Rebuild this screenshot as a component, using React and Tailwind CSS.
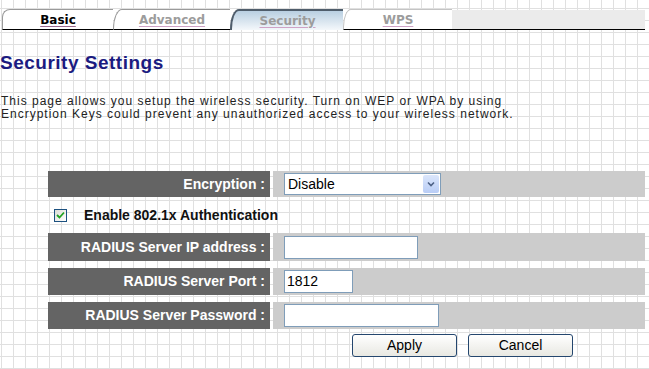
import React from "react";

const Tab = ({ children, className, textClass }) => (
  <div className={`flex items-center justify-center ${className}`}>
    <span className={`text-[12px] font-bold underline underline-offset-[2px] ${textClass}`} style={{ fontFamily: '"DejaVu Sans", Verdana, sans-serif' }}>
      {children}
    </span>
  </div>
);

const Label = ({ children }) => (
  <div className="w-[222px] shrink-0 bg-[#646464] flex items-center justify-end pr-[5px] text-white text-[14px] font-bold">
    {children}
  </div>
);

const TextInput = ({ w, value = "" }) => (
  <div className={`${w} h-[23px] bg-white border border-[#7f9db9] flex items-center px-[2px] text-[14px] text-black`}>
    {value}
  </div>
);

export default function App() {
  return (
    <div
      className="w-[649px] h-[369px] overflow-hidden bg-white bg-[linear-gradient(to_right,#e0e0e0_1px,transparent_1px),linear-gradient(to_bottom,#e0e0e0_1px,transparent_1px)] bg-[size:12px_12px] bg-[position:1px_8px] flex flex-col"
      style={{ fontFamily: '"Liberation Sans", Arial, sans-serif' }}
    >
      {/* Tabs */}
      <div className="flex ml-[2px] mt-[9px] h-[21px] w-[643px]">
        <Tab className="w-[111px] bg-white border-l border-t border-[#9a9a9a] border-b border-b-black rounded-tl-[8px]" textClass="text-black decoration-[#9a6a8e]">
          Basic
        </Tab>
        <Tab className="w-[117px] bg-white border-l border-t border-[#9a9a9a] border-b border-b-black rounded-tl-[9px_20px]" textClass="text-[#9c9c9c] decoration-[#cfa3c6]">
          Advanced
        </Tab>
        <Tab className="w-[113px] bg-gradient-to-b from-[#b9cfe1] to-[#f4f8fb] border-l-2 border-t-2 border-[#4f5d6b] rounded-tl-[9px_20px]" textClass="text-[#9c9c9c] decoration-[#cfa3c6]">
          Security
        </Tab>
        <Tab className="w-[109px] bg-white border-l border-t border-[#c4c4c4] border-b border-b-black rounded-tl-[8px_18px]" textClass="text-[#9c9c9c] decoration-[#cfa3c6]">
          WPS
        </Tab>
        <div className="flex-1 mt-[1px] bg-[#ebebeb] border-b border-black" />
      </div>

      {/* Title */}
      <h1 className="mt-[22px] ml-0 text-[19px] leading-[22px] font-bold text-[#1b1b80] tracking-[0.5px]">
        Security Settings
      </h1>

      {/* Description */}
      <p className="mt-[21px] ml-[1px] text-[12px] leading-[13px] text-[#222] tracking-[1px]">
        This page allows you setup the wireless security. Turn on WEP or WPA by using
        <br />
        Encryption Keys could prevent any unauthorized access to your wireless network.
      </p>

      {/* Form */}
      <div className="ml-[48px] w-[597px] mt-[50px] flex flex-col">
        <div className="flex h-[26px] gap-[3px]">
          <Label>Encryption :</Label>
          <div className="flex-1 bg-[#cccccc] flex items-center pl-[11px]">
            <div className="w-[157px] h-[22px] bg-white border border-[#7f9db9] flex items-center justify-between">
              <span className="pl-[3px] text-[14px] text-black">Disable</span>
              <div className="w-[16px] h-[18px] mr-[1px] bg-gradient-to-b from-[#dbe6fb] to-[#b9cdf6] rounded-[2px] flex items-center justify-center">
                <svg width="8" height="6" viewBox="0 0 8 6">
                  <path d="M1 1.5 L4 4.5 L7 1.5" fill="none" stroke="#4d6185" strokeWidth="1.6" />
                </svg>
              </div>
            </div>
          </div>
        </div>

        <div className="flex h-[28px] mt-[4px] items-center">
          <div className="ml-[6px] w-[13px] h-[13px] border border-[#1c5180] bg-gradient-to-br from-[#dcdcd6] to-white flex items-center justify-center">
            <svg width="9" height="8" viewBox="0 0 9 8">
              <path d="M1 4 L3.5 6.5 L8 1.5" fill="none" stroke="#21a121" strokeWidth="1.8" />
            </svg>
          </div>
          <span className="ml-[17px] text-[14px] font-bold text-[#111]">Enable 802.1x Authentication</span>
        </div>

        <div className="flex h-[28px] mt-[4px] gap-[3px]">
          <Label>RADIUS Server IP address :</Label>
          <div className="flex-1 bg-[#cccccc] flex items-center pl-[11px]">
            <TextInput w="w-[134px]" />
          </div>
        </div>

        <div className="flex h-[27px] mt-[7px] gap-[3px]">
          <Label>RADIUS Server Port :</Label>
          <div className="flex-1 bg-[#cccccc] flex items-center pl-[11px]">
            <TextInput w="w-[69px]" value="1812" />
          </div>
        </div>

        <div className="flex h-[27px] mt-[7px] gap-[3px]">
          <Label>RADIUS Server Password :</Label>
          <div className="flex-1 bg-[#cccccc] flex items-center pl-[11px]">
            <TextInput w="w-[155px]" />
          </div>
        </div>

        <div className="flex mt-[5px] ml-[304px] gap-[11px]">
          <button className="w-[105px] h-[23px] rounded-[3px] border border-[#24466e] bg-gradient-to-b from-white to-[#e8e8e2] text-[14px] text-black">
            Apply
          </button>
          <button className="w-[105px] h-[23px] rounded-[3px] border border-[#24466e] bg-gradient-to-b from-white to-[#e8e8e2] text-[14px] text-black">
            Cancel
          </button>
        </div>
      </div>
    </div>
  );
}
